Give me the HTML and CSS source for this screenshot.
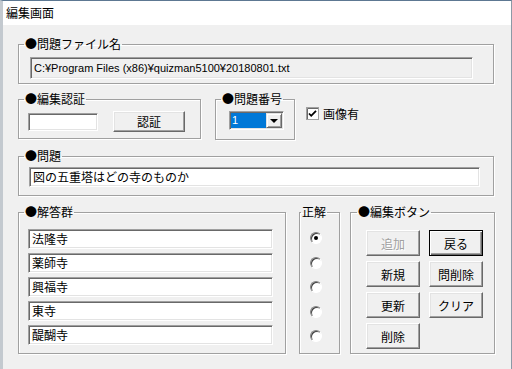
FILE: index.html
```html
<!DOCTYPE html>
<html lang="ja">
<head>
  <meta charset="UTF-8" />
  <title>編集画面</title>
  <link rel="stylesheet" href="styles.css">
</head>
<body>
  <div class="window">
    <div class="titlebar">編集画面</div>
    <div class="client">
      <fieldset class="grp grp-file">
        <legend>●問題ファイル名</legend>
        <div class="edit readonly path">C:¥Program Files (x86)¥quizman5100¥20180801.txt</div>
      </fieldset>

      <div class="row">
        <fieldset class="grp grp-auth">
          <legend>●編集認証</legend>
          <div class="auth-body">
            <div class="edit auth-input"></div>
            <button class="btn btn-auth">認証</button>
          </div>
        </fieldset>
        <fieldset class="grp grp-num">
          <legend>●問題番号</legend>
          <div class="combo">
            <span class="combo-sel">1</span>
            <span class="combo-drop"><span class="arrow"></span></span>
          </div>
        </fieldset>
        <label class="check">
          <svg class="checkbox" width="13" height="13" viewBox="0 0 13 13">
            <rect x="0.5" y="0.5" width="12" height="12" fill="#fff" stroke="#a0a0a0"/>
            <path d="M1.5 12 V1.5 H12" fill="none" stroke="#696969"/>
            <path d="M3 6.5 L5.2 8.8 L10 3.8" fill="none" stroke="#000" stroke-width="1.8"/>
          </svg>
          <span>画像有</span>
        </label>
      </div>

      <fieldset class="grp grp-question">
        <legend>●問題</legend>
        <div class="edit question">図の五重塔はどの寺のものか</div>
      </fieldset>

      <div class="row">
        <fieldset class="grp grp-answers">
          <legend>●解答群</legend>
          <div class="edit answer">法隆寺</div>
          <div class="edit answer">薬師寺</div>
          <div class="edit answer">興福寺</div>
          <div class="edit answer">東寺</div>
          <div class="edit answer">醍醐寺</div>
        </fieldset>
        <fieldset class="grp grp-correct">
          <legend>正解</legend>
          <span class="radio checked"></span>
          <span class="radio"></span>
          <span class="radio"></span>
          <span class="radio"></span>
          <span class="radio"></span>
        </fieldset>
        <fieldset class="grp grp-buttons">
          <legend>●編集ボタン</legend>
          <div class="btn-grid">
            <button class="btn disabled">追加</button>
            <button class="btn default">戻る</button>
            <button class="btn">新規</button>
            <button class="btn">問削除</button>
            <button class="btn">更新</button>
            <button class="btn">クリア</button>
            <button class="btn">削除</button>
          </div>
        </fieldset>
      </div>
    </div>
  </div>
</body>
</html>
```

FILE: styles.css
```css
body {
  margin: 0;
  background: #f0f0f0;
  font-family: "Noto Sans CJK JP", sans-serif;
  font-size: 12px;
  color: #000;
}
.window {
  width: 512px;
  height: 369px;
  box-sizing: border-box;
  border-top: 1px solid #5d7892;
  border-left: 3px solid #c3c9cf;
  border-right: 1px solid #8c99a6;
  overflow: hidden;
}
.titlebar {
  height: 24px;
  line-height: 24px;
  padding-left: 3px;
  background: #fff;
  font-size: 12px;
}
.client {
  padding: 12px 0 0 15px;
}
.row {
  display: flex;
  align-items: flex-start;
}
.grp {
  margin: 0;
  padding: 0;
  min-width: 0;
  box-sizing: border-box;
  border: 1px solid #a0a0a0;
  box-shadow: inset 1px 1px 0 #fff, 1px 1px 0 #fff;
}
.grp legend {
  margin-left: 5px;
  padding: 0 1px;
  font-size: 12px;
  line-height: 14px;
  white-space: nowrap;
}
.edit {
  box-sizing: border-box;
  background: #fff;
  border: 1px solid;
  border-color: #a0a0a0 #fff #fff #a0a0a0;
  box-shadow: inset 1px 1px 0 #696969, inset -1px -1px 0 #e3e3e3;
  padding-left: 3px;
  white-space: nowrap;
  overflow: hidden;
}
.readonly {
  background: #f0f0f0;
}
.grp-file {
  width: 476px;
  height: 47px;
  padding-top: 6px;
}
.path {
  width: 443px;
  height: 22px;
  margin-left: 11px;
  line-height: 20px;
  font-family: "Liberation Sans", "Noto Sans CJK JP", sans-serif;
  font-size: 11px;
}

.row:nth-of-type(1) {
  margin-top: 8px;
}
.grp-auth {
  width: 183px;
  height: 47px;
  padding-top: 5px;
}
.auth-body {
  display: flex;
  align-items: center;
  gap: 15px;
  padding-left: 9px;
}
.auth-input {
  width: 70px;
  height: 18px;
}
.btn {
  box-sizing: border-box;
  margin: 0;
  padding: 0;
  font-family: "Noto Sans CJK JP", sans-serif;
  font-size: 12px;
  color: #000;
  background: #f0f0f0;
  border: 1px solid;
  border-color: #fff #696969 #696969 #fff;
  box-shadow: inset -1px -1px 0 #a0a0a0, inset 1px 1px 0 #e3e3e3;
}
.btn-auth {
  width: 72px;
  height: 21px;
}
.grp-num {
  width: 80px;
  height: 48px;
  margin-left: 14px;
  padding-top: 5px;
}
.combo {
  display: flex;
  box-sizing: border-box;
  width: 55px;
  height: 19px;
  margin-left: 13px;
  padding: 1px;
  background: #fff;
  border: 1px solid;
  border-color: #a0a0a0 #fff #fff #a0a0a0;
  box-shadow: inset 1px 1px 0 #696969, inset -1px -1px 0 #e3e3e3;
}
.combo-sel {
  flex: 1;
  background: #0078d7;
  color: #fff;
  line-height: 15px;
  padding-left: 1px;
  font-family: "Liberation Sans", sans-serif;
  font-size: 11px;
}
.combo-drop {
  display: flex;
  align-items: center;
  justify-content: center;
  width: 16px;
  box-sizing: border-box;
  background: #f0f0f0;
  border: 1px solid;
  border-color: #e3e3e3 #696969 #696969 #e3e3e3;
  box-shadow: inset 1px 1px 0 #fff, inset -1px -1px 0 #a0a0a0;
}
.arrow {
  width: 0;
  height: 0;
  border-left: 4px solid transparent;
  border-right: 4px solid transparent;
  border-top: 4px solid #000;
  margin-top: 1px;
}
.check {
  display: flex;
  align-items: center;
  gap: 4px;
  margin: 15px 0 0 11px;
  font-size: 12px;
  line-height: 13px;
}
.checkbox {
  display: block;
}

.grp-question {
  width: 476px;
  height: 47px;
  margin-top: 9px;
  padding-top: 4px;
}
.question {
  width: 451px;
  height: 20px;
  margin-left: 10px;
  line-height: 18px;
}

.row:nth-of-type(2) {
  margin-top: 9px;
}
.grp-answers {
  width: 268px;
  height: 149px;
  padding-top: 10px;
}
.answer {
  width: 245px;
  height: 20px;
  margin: 0 0 4px 9px;
  line-height: 18px;
}
.grp-correct {
  width: 41px;
  height: 149px;
  margin-left: 13px;
  padding-top: 13px;
  display: flex;
  flex-direction: column;
  gap: 12.5px;
}
.grp-correct legend {
  margin-left: 1px;
}
.radio {
  display: block;
  box-sizing: border-box;
  width: 12px;
  height: 12px;
  margin-left: 10px;
  border-radius: 50%;
  background: #fff;
  border: 1px solid;
  border-color: #808080 #fff #fff #808080;
  box-shadow: inset 1px 1px 0 #404040;
  position: relative;
}
.radio.checked::after {
  content: "";
  position: absolute;
  left: 3px;
  top: 3px;
  width: 4px;
  height: 4px;
  border-radius: 50%;
  background: #000;
}
.grp-buttons {
  width: 145px;
  height: 149px;
  margin-left: 10px;
  padding-top: 11px;
}
.grp-buttons legend {
  margin-left: 6px;
}
.btn-grid {
  display: grid;
  grid-template-columns: 54px 54px;
  grid-auto-rows: 26px;
  column-gap: 9px;
  row-gap: 5px;
  margin-left: 15px;
}
.btn.disabled {
  color: #a0a0a0;
  text-shadow: 1px 1px 0 #fff;
}
.btn.default {
  border-color: #000;
  box-shadow: inset 1px 1px 0 #fff, inset -1px -1px 0 #696969, inset -2px -2px 0 #a0a0a0;
}
```
